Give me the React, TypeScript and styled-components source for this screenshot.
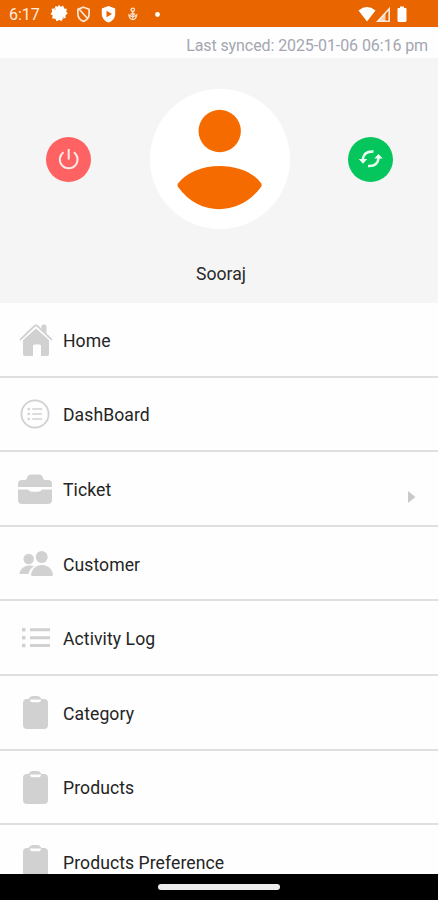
import React from "react";
import styled, { createGlobalStyle } from "styled-components";

const GlobalStyle = createGlobalStyle`
  * { box-sizing: border-box; }
  body { margin: 0; background: #fff; font-family: Roboto, sans-serif; }
`;

const Screen = styled.div`
  display: flex;
  flex-direction: column;
  width: 438px;
  height: 900px;
  overflow: hidden;
  background: #fefefe;
`;

const StatusBar = styled.header`
  display: flex;
  flex: none;
  align-items: center;
  height: 27px;
  padding: 2px 29px 0 9px;
  background: #e86500;
  color: #ffeee0;
`;

const Clock = styled.span`
  width: 40px;
  font-size: 16px;
  line-height: 20px;
  white-space: nowrap;
`;

const StatusIcons = styled.div`
  display: flex;
  flex: 1;
  align-items: center;
  margin-top: -2px;
  svg { display: block; }
`;

const SignalIcons = styled(StatusIcons)`
  flex: none;
`;

const SyncLine = styled.div`
  flex: none;
  height: 31px;
  padding: 8px 10px 0 0;
  text-align: right;
  font-size: 16px;
  line-height: 21px;
  letter-spacing: -0.09px;
  color: #a4a6b1;
  white-space: nowrap;
`;

const Profile = styled.section`
  display: flex;
  flex: none;
  flex-direction: column;
  height: 245px;
  padding: 31px 45px 0 46px;
  background: #f5f5f5;
`;

const ProfileActions = styled.div`
  display: flex;
  align-items: center;
  justify-content: space-between;
  height: 140px;
`;

const RoundButton = styled.button<{ $color: string }>`
  display: flex;
  align-items: center;
  justify-content: center;
  width: 45px;
  height: 45px;
  padding: 0;
  border: 0;
  border-radius: 50%;
  background: ${(p) => p.$color};
`;

const Avatar = styled.div`
  width: 140px;
  height: 140px;
  border-radius: 50%;
  background: #fff;
  svg { display: block; }
`;

const UserName = styled.div`
  margin-top: 34px;
  padding-left: 3px;
  text-align: center;
  font-size: 17.6px;
  line-height: 22px;
  color: #2a2a2a;
`;

const Menu = styled.nav`
  flex: 1;
  min-height: 0;
  overflow: hidden;
`;

const MenuRow = styled.a`
  display: flex;
  align-items: center;
  height: 74.6px;
  padding: 0 22px 0 17px;
  border-bottom: 2px solid #dfdfdf;
  color: #242424;
`;

const RowIcon = styled.svg`
  flex: none;
  width: 36px;
  height: 36px;
  margin-right: 10px;
  fill: #d1d1d1;
`;

const RowLabel = styled.span`
  flex: 1;
  padding-top: 3px;
  font-size: 17.6px;
  line-height: 24px;
  letter-spacing: 0.07px;
  white-space: nowrap;
`;

const Arrow = styled.svg`
  flex: none;
  margin-top: 18px;
`;

const NavigationBar = styled.footer`
  display: flex;
  flex: none;
  justify-content: center;
  height: 26px;
  padding-top: 10px;
  background: #000;
`;

const HomeHandle = styled.div`
  width: 122px;
  height: 6px;
  border-radius: 3px;
  background: #ececec;
`;

const HomeShape = () => (
  <>
    <path d="M6 18.500 19 7l13 11.500V33q0 2-2 2h-6V25q0-1.500-1.500-1.500h-5q-1.500 0-1.500 1.500v10H8q-2 0-2-2z" />
    <path d="M24.500 5q0-1.500 2.500-1.500t2.500 1.500V15l-5-4z" />
    <path d="M3.500 19.500 19 5.700l15.500 13.800" fill="none" stroke="#fefefe" strokeWidth="2.500" />
    <path d="M3.500 18.300 17.500 5q1.500-1.300 3 0L34.500 18.300" fill="none" stroke="#d1d1d1" strokeWidth="1.800" strokeLinecap="round" />
  </>
);

const DashboardShape = () => (
  <>
    <circle cx="18" cy="18" r="13.600" fill="none" stroke="#d1d1d1" strokeWidth="1.800" />
    <path d="M15.800 13H24.500M15.800 18H24.500M15.800 23H24.500" stroke="#d1d1d1" strokeWidth="1.500" strokeLinecap="round" />
    <circle cx="11.700" cy="13" r="1.300" />
    <circle cx="11.700" cy="18" r="1.300" />
    <circle cx="11.700" cy="23" r="1.300" />
  </>
);

const BriefcaseShape = () => (
  <>
    <path d="M1 17v-3q0-4 4-4h3q1.500 0 2-2 .8-3.500 4-3.500h8q3.200 0 4 3.500.5 2 2 2h3q4 0 4 4v3z" />
    <path d="M1 19.500h10q1.500 2.300 4 2.300h6q2.500 0 4-2.300h10V30q0 4-4 4H5q-4 0-4-4z" />
  </>
);

const PeopleShape = () => (
  <>
    <circle cx="11.700" cy="14" r="5.200" />
    <path d="M2.500 28c1.500-5 5-7.500 10.500-7.500 1.600 0 3 .3 4.200.8-3.500 1.500-5 4.700-5.700 7.700H3.400q-1.200 0-.9-1z" />
    <circle cx="24.700" cy="12" r="6" />
    <path d="M14 29.500c1.200-6 5.200-9.500 11-9.500s9.800 3.500 11 9.500q.2 1.500-1.500 1.500h-19q-1.700 0-1.500-1.500z" />
  </>
);

const ListShape = () => (
  <path d="M5 8h3.500v3.500H5zM13 8.200h20v3H13zM5 16h3.500v3.500H5zM13 16.200h20v3H13zM5 23.700h3.500v3.500H5zM13 23.900h20v3H13z" />
);

const ClipboardShape = () => (
  <>
    <path d="M6 9q0-4 4-4h1.500q1.500-3 4-3h5q2.500 0 4 3H27q4 0 4 4v22q0 4-4 4H10q-4 0-4-4z" />
    <path d="M13 5.500h11q0 2.800-2.500 2.800h-6q-2.500 0-2.500-2.800z" fill="#fefefe" />
  </>
);

const items = [
  { label: "Home", Shape: HomeShape },
  { label: "DashBoard", Shape: DashboardShape },
  { label: "Ticket", Shape: BriefcaseShape, expandable: true },
  { label: "Customer", Shape: PeopleShape },
  { label: "Activity Log", Shape: ListShape },
  { label: "Category", Shape: ClipboardShape },
  { label: "Products", Shape: ClipboardShape },
  { label: "Products Preference", Shape: ClipboardShape },
];

export default function App() {
  return (
    <Screen>
      <GlobalStyle />
      <StatusBar>
        <Clock>6:17</Clock>
        <StatusIcons>
          <svg width="115" height="20" viewBox="0 0 115 20">
            <path
              d="m10 .8 1.800 2 2.600-1 .6 2.700 2.900.2-.7 2.600 1.500 2.200-2.200 1.700.2 2.800-2.700.5-1.400 2.600-2.400-1.200-2.600 1.300-1.200-2.400-3.300-.3.600-3L1.500 10l1.700-2.200-.6-3 3-.3 1-2.500 2.200.8z"
              fill="#fff"
            />
            <path d="m5.500 6 1.300-1.600M13.500 14.500l1.200-1.300" stroke="#f4a773" strokeWidth="1" />
            <path d="m34.500 3.200 5.600 2.100v4.700c0 3.600-2.300 6-5.600 7.400-3.300-1.400-5.600-3.800-5.600-7.400V5.300zM30.500 5.500l8 9" fill="none" stroke="#fff" strokeOpacity=".85" strokeWidth="1.700" />
            <path d="m59.500 2 6.700 2.600V10c0 4-2.700 7.100-6.700 8.500-4-1.400-6.700-4.500-6.700-8.500V4.600z" fill="#fff" />
            <path d="m57.500 6.700 5.500 3.300-5.500 3.300z" fill="#e86500" />
            <g fill="none" stroke="#fff" strokeOpacity=".8" strokeWidth="1.400">
              <circle cx="83.800" cy="5.800" r="1.700" />
              <path d="M83.800 7.500v7M80 11q.5 4.500 3.800 4.500t3.800-4.500l-3.800 2zM81.500 10h4.600" />
            </g>
            <circle cx="108.500" cy="10.500" r="2.400" fill="#fff" />
          </svg>
        </StatusIcons>
        <SignalIcons>
          <svg width="51" height="20" viewBox="0 0 51 20">
            <path d="M.5 6.500Q9-.3 17.500 6.500L9 17.500z" fill="#fff" />
            <path d="M31.200 4.800V17.200H19.800z" fill="none" stroke="#fff" strokeOpacity=".85" strokeWidth="1.600" />
            <path d="M27.500 9v8H20z" fill="#fff" fillOpacity=".7" />
            <path d="M42 2.500h4V4h1.500q1 0 1 1v11.500q0 1.500-1.500 1.500h-6q-1.500 0-1.500-1.500V5q0-1 1-1H42z" fill="#fff" />
          </svg>
        </SignalIcons>
      </StatusBar>
      <SyncLine>Last synced: 2025-01-06 06:16 pm</SyncLine>
      <Profile>
        <ProfileActions>
          <RoundButton $color="#fe6262" aria-label="Log out">
            <svg width="24" height="24" viewBox="0 0 24 24" fill="none" stroke="#ffeaea" strokeWidth="2">
              <path d="M11.700 2v10.500M6.500 5.200a8.900 8.900 0 1 0 10.400 0" />
            </svg>
          </RoundButton>
          <Avatar>
            <svg width="140" height="140" viewBox="0 0 140 140" fill="#f66b00">
              <circle cx="69.700" cy="42" r="21.200" />
              <path d="M28 94.500C45 71 95 71 111.300 94.500q.9 1.700-.3 3.500C90 127.500 49 127.500 28.500 98.500q-1.800-2-.5-4z" />
            </svg>
          </Avatar>
          <RoundButton $color="#05c65d" aria-label="Synchronize">
            <svg width="26" height="24" viewBox="0 0 26 24">
              <path d="M4.800 12.500Q5.500 4 15.500 4.500M20.500 11Q20 19.500 10 19" fill="none" stroke="#edfff4" strokeWidth="2.500" />
              <path d="M.8 12h8.400L5 16.700zM16.300 11.500h8.400L20.500 7z" fill="#edfff4" />
            </svg>
          </RoundButton>
        </ProfileActions>
        <UserName>Sooraj</UserName>
      </Profile>
      <Menu>
        {items.map(({ label, Shape, expandable }) => (
          <MenuRow key={label}>
            <RowIcon viewBox="0 0 36 36">
              <Shape />
            </RowIcon>
            <RowLabel>{label}</RowLabel>
            {expandable && (
              <Arrow width="9" height="12" viewBox="0 0 9 12">
                <path d="M1 0l7.500 6L1 12z" fill="#c9c9c9" />
              </Arrow>
            )}
          </MenuRow>
        ))}
      </Menu>
      <NavigationBar>
        <HomeHandle />
      </NavigationBar>
    </Screen>
  );
}
